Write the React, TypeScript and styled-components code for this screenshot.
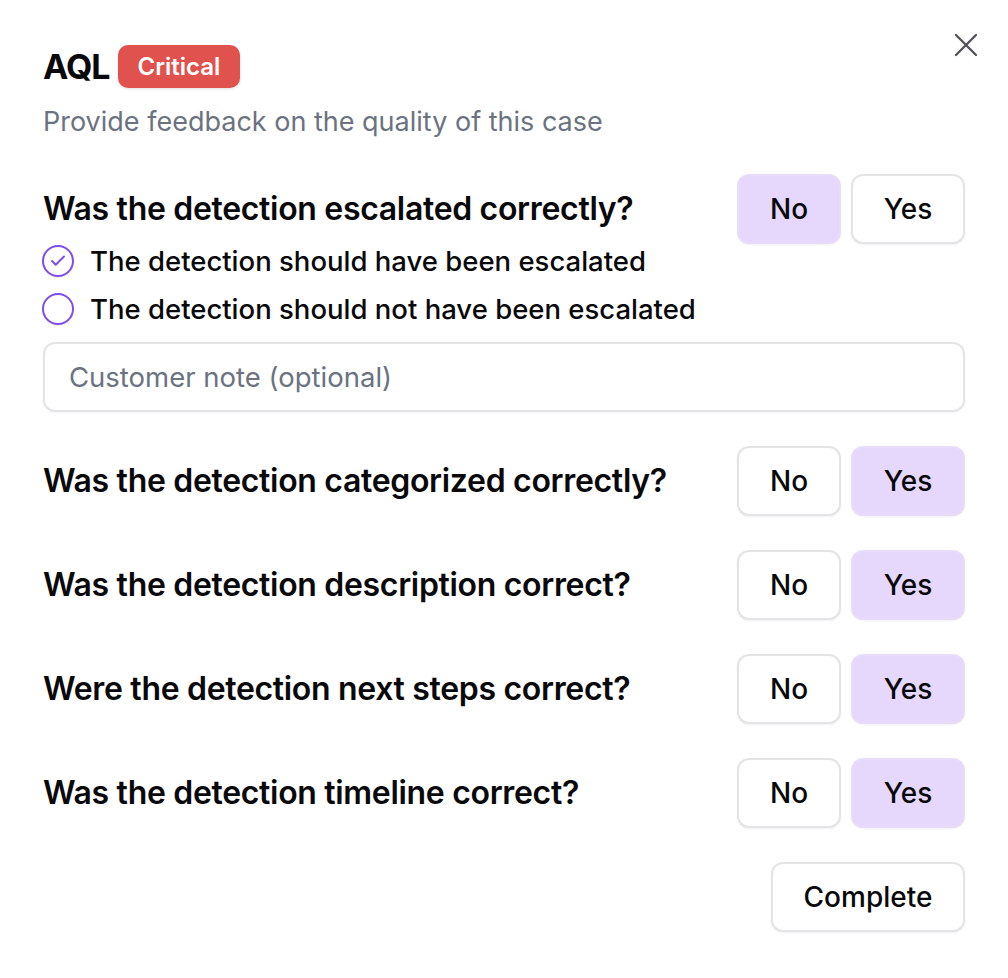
import styled, { createGlobalStyle } from "styled-components";

const GlobalStyle = createGlobalStyle`
  body {
    margin: 0;
    background: #ffffff;
    font-family: Inter, "Noto Sans", "Liberation Sans", sans-serif;
    color: #09090b;
  }
`;

const Panel = styled.div`
  position: relative;
  padding: 45px 43px 40px 43px;
  display: flex;
  flex-direction: column;
`;

const CloseButton = styled.button`
  position: absolute;
  top: 25px;
  right: 22px;
  width: 40px;
  height: 40px;
  padding: 0;
  border: none;
  background: transparent;
  color: #52525b;
  display: flex;
  align-items: center;
  justify-content: center;
`;

const TitleRow = styled.div`
  display: flex;
  align-items: center;
  gap: 8px;
  height: 43px;
`;

const Title = styled.h1`
  margin: 0;
  font-size: 34px;
  font-weight: 700;
  letter-spacing: -0.03em;
  line-height: 43px;
`;

const Badge = styled.span`
  display: inline-flex;
  align-items: center;
  height: 43px;
  padding: 0 20px;
  border-radius: 10px;
  background: #e0524e;
  color: #ffffff;
  font-size: 24px;
  font-weight: 600;
  box-shadow: 0 1px 3px rgba(0, 0, 0, 0.12);
`;

const Subtitle = styled.p`
  margin: 14px 0 0 0;
  font-size: 27px;
  line-height: 40px;
  color: #6b7280;
`;

const Section = styled.div<{ $first?: boolean }>`
  margin-top: ${(p) => (p.$first ? "32px" : "34px")};
`;

const QuestionRow = styled.div`
  display: flex;
  align-items: flex-start;
  justify-content: space-between;
`;

const QuestionCol = styled.div`
  display: flex;
  flex-direction: column;
`;

const Question = styled.h2`
  margin: 11px 0 0 0;
  font-size: 32px;
  line-height: 48px;
  font-weight: 600;
  letter-spacing: -0.01em;
`;

const ButtonGroup = styled.div`
  display: flex;
  gap: 10px;
`;

const Choice = styled.button<{ $selected?: boolean; $w: number }>`
  width: ${(p) => p.$w}px;
  height: 70px;
  border-radius: 12px;
  border: 2px solid ${(p) => (p.$selected ? "#e7dcf9" : "#e4e4e7")};
  background: ${(p) => (p.$selected ? "#e6d8fc" : "#ffffff")};
  box-shadow: 0 1px 2px rgba(0, 0, 0, 0.06);
  font-family: inherit;
  font-size: 28px;
  font-weight: 500;
  color: #09090b;
  cursor: pointer;
`;

const RadioList = styled.div`
  margin-top: 4px;
  display: flex;
  flex-direction: column;
`;

const RadioItem = styled.label`
  display: flex;
  align-items: center;
  gap: 16px;
  height: 48px;
  font-size: 27.5px;
  font-weight: 500;
  color: #09090b;
`;

const RadioCircle = styled.span`
  box-sizing: border-box;
  width: 32px;
  height: 32px;
  border-radius: 50%;
  border: 2px solid #7c4dea;
  display: flex;
  align-items: center;
  justify-content: center;
  color: #7c4dea;
  box-shadow: 0 1px 2px rgba(0, 0, 0, 0.08);
  margin-left: -1px;
`;

const NoteInput = styled.input`
  box-sizing: border-box;
  margin-top: 9px;
  width: 100%;
  height: 70px;
  border: 2px solid #e4e4e7;
  border-radius: 12px;
  padding: 0 24px;
  font-family: inherit;
  font-size: 27.5px;
  color: #09090b;
  box-shadow: 0 1px 2px rgba(0, 0, 0, 0.05);
  outline: none;
  &::placeholder {
    color: #6b7280;
  }
`;

const Footer = styled.div`
  margin-top: 34px;
  display: flex;
  justify-content: flex-end;
`;

const CompleteButton = styled.button`
  width: 194px;
  height: 70px;
  border-radius: 12px;
  border: 2px solid #e4e4e7;
  background: #ffffff;
  box-shadow: 0 1px 2px rgba(0, 0, 0, 0.06);
  font-family: inherit;
  font-size: 28px;
  font-weight: 500;
  color: #09090b;
`;

const questions = [
  { text: "Was the detection categorized correctly?", answer: "yes" },
  { text: "Was the detection description correct?", answer: "yes" },
  { text: "Were the detection next steps correct?", answer: "yes" },
  { text: "Was the detection timeline correct?", answer: "yes" },
];

const YesNo = ({ answer }: { answer: string }) => (
  <ButtonGroup>
    <Choice $w={104} $selected={answer === "no"}>No</Choice>
    <Choice $w={114} $selected={answer === "yes"}>Yes</Choice>
  </ButtonGroup>
);

const App = () => (
  <>
    <GlobalStyle />
    <Panel>
      <CloseButton aria-label="Close">
        <svg width="40" height="40" viewBox="0 0 24 24" fill="none" stroke="currentColor" strokeWidth="1.4" strokeLinecap="round">
          <path d="M18 6 6 18" />
          <path d="m6 6 12 12" />
        </svg>
      </CloseButton>
      <TitleRow>
        <Title>AQL</Title>
        <Badge>Critical</Badge>
      </TitleRow>
      <Subtitle>Provide feedback on the quality of this case</Subtitle>

      <Section $first>
        <QuestionRow>
          <QuestionCol>
            <Question>Was the detection escalated correctly?</Question>
            <RadioList>
              <RadioItem>
                <RadioCircle>
                  <svg width="18" height="18" viewBox="0 0 24 24" fill="none" stroke="currentColor" strokeWidth="2.6" strokeLinecap="round" strokeLinejoin="round">
                    <path d="M20 6 9 17l-5-5" />
                  </svg>
                </RadioCircle>
                The detection should have been escalated
              </RadioItem>
              <RadioItem>
                <RadioCircle />
                The detection should not have been escalated
              </RadioItem>
            </RadioList>
          </QuestionCol>
          <YesNo answer="no" />
        </QuestionRow>
        <NoteInput placeholder="Customer note (optional)" />
      </Section>

      {questions.map((q) => (
        <Section key={q.text}>
          <QuestionRow>
            <QuestionCol>
              <Question>{q.text}</Question>
            </QuestionCol>
            <YesNo answer={q.answer} />
          </QuestionRow>
        </Section>
      ))}

      <Footer>
        <CompleteButton>Complete</CompleteButton>
      </Footer>
    </Panel>
  </>
);

export default App;
